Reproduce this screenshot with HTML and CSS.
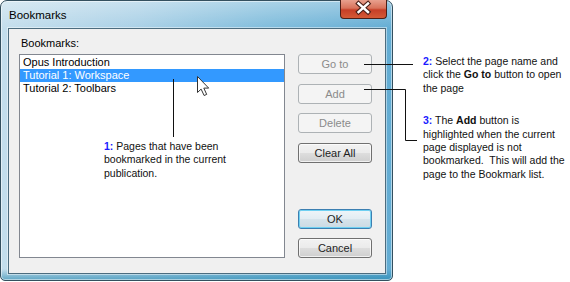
FILE: index.html
```html
<html>

<head>
  <link rel="stylesheet" href="styles.css">
</head>

<body>
  <div class="page">
    <!-- Dialog window -->
    <div class="window">
      <div class="titlebar">
        <span class="title">Bookmarks</span>
        <div class="close">
          <svg width="46" height="18" viewBox="0 0 46 18">
            <path d="M18.5 4.5 L28 13 M28 4.5 L18.5 13" stroke="#4a2018" stroke-width="4.6" stroke-linecap="square" />
            <path d="M18.5 4.5 L28 13 M28 4.5 L18.5 13" stroke="#fff" stroke-width="2.4" stroke-linecap="square" />
          </svg>
        </div>
      </div>

      <div class="client">
        <div class="label">Bookmarks:</div>
        <ul class="listbox">
          <li>Opus Introduction</li>
          <li class="selected">Tutorial 1: Workspace</li>
          <li>Tutorial 2: Toolbars</li>
        </ul>

        <div class="buttons">
          <div class="group">
            <button class="btn" disabled>Go to</button>
            <button class="btn" disabled>Add</button>
            <button class="btn" disabled>Delete</button>
            <button class="btn">Clear All</button>
          </div>
          <div class="group group-bottom">
            <button class="btn btn-default">OK</button>
            <button class="btn">Cancel</button>
          </div>
        </div>
      </div>
    </div>

    <!-- Callout notes -->
    <div class="notes">
      <p class="note note-goto"><b class="num">2:</b> Select the page name and<br>click the <b>Go to</b> button to open<br>the page</p>
      <p class="note note-add"><b class="num">3:</b> The <b>Add</b> button is<br>highlighted when the current<br>page displayed is not<br>bookmarked.&nbsp; This will add the<br>page to the Bookmark list.</p>
    </div>

    <p class="note note-list"><b class="num">1:</b> Pages that have been<br>bookmarked in the current<br>publication.</p>

    <!-- Leader lines and mouse pointer -->
    <svg class="overlay" width="570" height="282" viewBox="0 0 570 282">
      <g stroke="#111" stroke-width="1" fill="none">
        <line x1="364" y1="64.5" x2="413" y2="64.5" />
        <polyline points="364,89.5 405.5,89.5 405.5,140.5 417,140.5" />
        <line x1="173.5" y1="79" x2="173.5" y2="137" />
      </g>
      <path transform="translate(197.5 76.5)" d="M0 0 V16 L3.6 12.6 L6.6 19 L9.2 17.9 L6.3 11.6 H11.2 Z" fill="#fff" stroke="#333" stroke-width="1" stroke-linejoin="round" />
    </svg>
  </div>
</body>

</html>
```

FILE: styles.css
```css
body {
  margin: 0;
  background-color: white;
  font-family: "Liberation Sans", Arial, sans-serif;
}

.page {
  position: relative;
  display: flex;
  width: 570px;
  height: 282px;
}

/* Window frame */
.window {
  box-sizing: border-box;
  width: 393px;
  height: 281px;
  flex-shrink: 0;
  border: 1px solid #34505f;
  border-radius: 7px 7px 5px 5px;
  background:
    linear-gradient(to bottom, rgba(255, 255, 255, 0.35) 0, rgba(255, 255, 255, 0) 28px, rgba(255, 255, 255, 0) 268px, rgba(30, 130, 170, 0.6) 100%),
    linear-gradient(to right, #c4deec 0%, #a9d0e6 35%, #7dbbdb 70%, #62acd3 100%);
  box-shadow: inset 0 0 0 1px rgba(255, 255, 255, 0.5);
}

.titlebar {
  display: flex;
  justify-content: space-between;
  align-items: center;
  height: 27px;
}

.title {
  margin-left: 8px;
  font-size: 11.5px;
  color: #000;
}

.close {
  align-self: flex-start;
  box-sizing: border-box;
  width: 47px;
  height: 19px;
  margin-top: -1px;
  margin-right: 5px;
  border: 1px solid #4b1f17;
  border-top: none;
  border-radius: 0 0 4px 4px;
  background: linear-gradient(to bottom, #e8a08e 0%, #d8735b 45%, #c63f27 55%, #d45a36 100%);
}

.close svg {
  display: block;
  margin-top: -1px;
  margin-left: -1px;
}

/* Client area */
.client {
  box-sizing: border-box;
  width: 378px;
  height: 246px;
  margin-left: 7px;
  padding: 8px 0 0 10px;
  border: 1px solid #4c6c7e;
  background-color: #f0f0f0;
  box-shadow: 0 0 0 1px rgba(255, 255, 255, 0.45);
  display: grid;
  grid-template-columns: 266px 74px;
  grid-template-rows: 17px 204px;
  column-gap: 13px;
  font-size: 11px;
  color: #000;
}

.label {
  grid-column: 1;
  padding-left: 2px;
  line-height: 13px;
}

.listbox {
  grid-column: 1;
  grid-row: 2;
  box-sizing: border-box;
  margin: 0;
  padding: 1px 0 0 0;
  list-style: none;
  border: 1px solid #828790;
  background-color: white;
}

.listbox li {
  height: 13px;
  line-height: 13px;
  padding-left: 3px;
}

.listbox li.selected {
  background-color: #3399ff;
  color: white;
}

/* Buttons */
.buttons {
  grid-column: 2;
  grid-row: 2;
  display: flex;
  flex-direction: column;
  justify-content: space-between;
}

.group {
  display: flex;
  flex-direction: column;
  gap: 9.7px;
}

.group-bottom {
  gap: 9px;
}

.btn {
  box-sizing: border-box;
  width: 74px;
  height: 20px;
  padding: 0;
  border: 1px solid #707070;
  border-radius: 3px;
  font-family: "Liberation Sans", Arial, sans-serif;
  font-size: 11px;
  font-weight: 400;
  color: #1e1e1e;
  background: linear-gradient(to bottom, #f2f2f2 0%, #ebebeb 48%, #dddddd 52%, #cfcfcf 100%);
  box-shadow: inset 0 0 0 1px rgba(255, 255, 255, 0.7);
}

.btn:disabled {
  border-color: #adb2b5;
  background: #f4f4f4;
  color: #8b8b8b;
  box-shadow: none;
}

.btn-default {
  border-color: #3c7fb1;
  background: linear-gradient(to bottom, #eef5f9 0%, #e3edf3 48%, #d6e3eb 52%, #cbdae3 100%);
  box-shadow: inset 0 0 0 1px #6fd0f2;
}

/* Callouts */
.notes {
  display: flex;
  flex-direction: column;
  padding: 55px 0 0 30px;
}

.note {
  margin: 0;
  font-family: "Liberation Sans", Arial, sans-serif;
  font-size: 10.5px;
  line-height: 13.4px;
  color: #111;
}

.note-add {
  margin-top: 19px;
}

.note .num {
  color: #1a1aff;
}

.note-list {
  position: absolute;
  left: 104px;
  top: 140px;
}

.overlay {
  position: absolute;
  left: 0;
  top: 0;
  pointer-events: none;
}
```
